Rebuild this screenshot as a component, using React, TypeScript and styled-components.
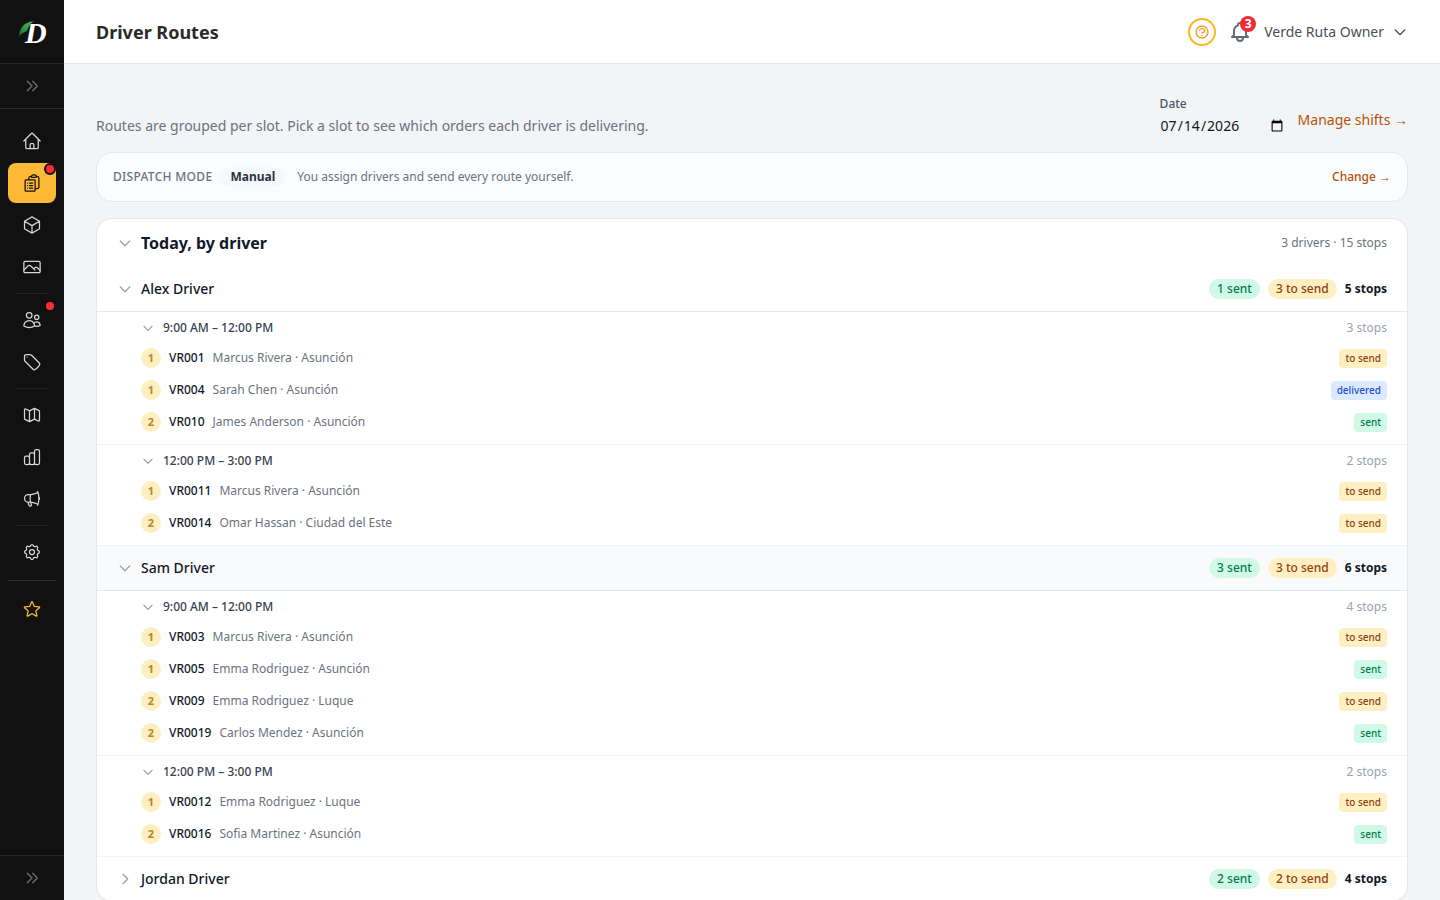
import React, { useState } from "react";
import styled, { createGlobalStyle, css } from "styled-components";
import {
  HiOutlineBell,
  HiOutlineChartBar,
  HiOutlineChevronDoubleRight,
  HiOutlineChevronDown,
  HiOutlineChevronRight,
  HiOutlineCog,
  HiOutlineMap,
  HiOutlineQuestionMarkCircle,
} from "react-icons/hi";
import {
  HiOutlineClipboardDocumentList,
  HiOutlineCube,
  HiOutlineHome,
  HiOutlineMegaphone,
  HiOutlineStar,
  HiOutlineTag,
  HiOutlineUsers,
} from "react-icons/hi2";

const GlobalStyle = createGlobalStyle`
  *, *::before, *::after { box-sizing: border-box; }
  body {
    margin: 0;
    background: #f3f4f6;
    color: #111827;
    font-family: "Noto Sans", sans-serif;
    font-size: 14px;
    line-height: 20px;
  }
  button, input { font: inherit; color: inherit; }
  button { border: 0; padding: 0; background: none; cursor: pointer; }
  a { text-decoration: none; }
  h1, h2, h3, p, ul, ol { margin: 0; padding: 0; }
  ul, ol { list-style: none; }
  svg { display: block; flex: none; }
`;

/* ---------- Shell ---------- */

const Shell = styled.div`
  display: flex;
  align-items: flex-start;
  min-height: 100vh;
`;

const Sidebar = styled.aside`
  position: sticky;
  top: 0;
  display: flex;
  flex-direction: column;
  flex: none;
  width: 64px;
  height: 100vh;
  background: #111111;
`;

const LogoLink = styled.a`
  display: flex;
  align-items: center;
  justify-content: center;
  height: 64px;
  border-bottom: 1px solid #24292d;
`;

const ExpandButton = styled.button<{ $edge: "top" | "bottom" }>`
  display: flex;
  align-items: center;
  justify-content: center;
  height: 45px;
  color: #6b7078;
  ${({ $edge }) =>
    $edge === "top"
      ? css`border-top: 1px solid #24292d;`
      : css`border-bottom: 1px solid #24292d;`}
`;

const Nav = styled.nav`
  display: flex;
  flex-direction: column;
  flex: 1;
  gap: 2px;
  padding: 12px 8px;
`;

const NavLink = styled.a<{ $active?: boolean; $accent?: boolean }>`
  position: relative;
  display: flex;
  align-items: center;
  justify-content: center;
  height: 40px;
  border-radius: 8px;
  color: ${({ $active, $accent }) => ($active ? "#111111" : $accent ? "#fbb91c" : "#d6d6d6")};
  background: ${({ $active }) => ($active ? "#feb937" : "transparent")};
`;

const NavDot = styled.span`
  position: absolute;
  top: 0;
  right: 0;
  width: 12px;
  height: 12px;
  border: 2px solid #111111;
  border-radius: 50%;
  background: #fb2c36;
`;

const NavDivider = styled.hr<{ $wide?: boolean }>`
  width: ${({ $wide }) => ($wide ? "100%" : "auto")};
  height: 1px;
  margin: ${({ $wide }) => ($wide ? "6px 0" : "4px 8px")};
  border: 0;
  background: ${({ $wide }) => ($wide ? "#2a2e32" : "#232323")};
`;

const Page = styled.div`
  flex: 1;
  min-width: 0;
`;

/* ---------- Top bar ---------- */

const TopBar = styled.header`
  display: flex;
  align-items: center;
  justify-content: space-between;
  height: 64px;
  padding: 0 32px;
  border-bottom: 1px solid #e5e7eb;
  background: #ffffff;
`;

const PageTitle = styled.h1`
  color: #2a2a2a;
  font-size: 18px;
  font-weight: 700;
  line-height: 28px;
`;

const TopActions = styled.div`
  display: flex;
  align-items: center;
  gap: 12px;
`;

const HelpButton = styled.button`
  display: flex;
  align-items: center;
  justify-content: center;
  width: 28px;
  height: 28px;
  border: 2px solid #fbb91c;
  border-radius: 50%;
  color: #f59e1b;
`;

const BellButton = styled.button`
  position: relative;
  color: #666a73;
`;

const BellCount = styled.span`
  position: absolute;
  top: -4px;
  right: -4px;
  width: 16px;
  height: 16px;
  border-radius: 50%;
  background: #f02b38;
  color: #ffffff;
  font-size: 12px;
  font-weight: 700;
  line-height: 16px;
  text-align: center;
`;

const UserButton = styled.button`
  display: flex;
  align-items: center;
  gap: 8px;
  color: #4b4f57;
`;

/* ---------- Content ---------- */

const Main = styled.main`
  padding: 32px;
  display: flex;
  flex-direction: column;
  gap: 16px;
`;

const Intro = styled.div`
  display: flex;
  align-items: flex-end;
  justify-content: space-between;
  gap: 16px;
`;

const IntroText = styled.p`
  color: #6b7280;
`;

const IntroTools = styled.div`
  display: flex;
  align-items: flex-end;
  gap: 12px;
`;

const DateField = styled.div`
  display: flex;
  flex-direction: column;
  gap: 4px;
`;

const DateLabel = styled.label`
  color: #4b5563;
  font-size: 12px;
  font-weight: 500;
  line-height: 16px;
`;

const DateInput = styled.input`
  width: 126px;
  height: 20px;
  padding: 0;
  border: 0;
  background: transparent;
  color: #111827;
`;

const ShiftsLink = styled.a`
  padding-bottom: 6px;
  color: #b45309;
`;

const DispatchCard = styled.section`
  display: flex;
  align-items: center;
  gap: 12px;
  padding: 14px 16px;
  border: 1px solid #e5e7eb;
  border-radius: 16px;
  background: #fbfcfd;
  color: #6b7280;
  font-size: 12px;
`;

const DispatchCurrent = styled.div`
  display: flex;
  align-items: center;
  gap: 8px;
`;

const DispatchLabel = styled.h2`
  font-size: 12px;
  font-weight: 500;
  letter-spacing: 0.025em;
  text-transform: uppercase;
`;

const DispatchMode = styled.strong`
  padding: 0 10px;
  border-radius: 10px;
  background: #f6f8fa;
  color: #2b3443;
  font-weight: 700;
`;

const ChangeLink = styled.a`
  margin-left: auto;
  color: #b45309;
  font-weight: 500;
`;

const RoutesCard = styled.section`
  overflow: hidden;
  border: 1px solid #e5e7eb;
  border-radius: 16px;
  background: #ffffff;
`;

const rowButton = css`
  display: flex;
  align-items: center;
  gap: 8px;
  width: 100%;
  text-align: left;
  > svg { color: #9ca3af; }
`;

const CardHeader = styled.button`
  ${rowButton}
  padding: 12px 20px;
`;

const CardTitle = styled.span`
  flex: 1;
  font-size: 16px;
  font-weight: 700;
  line-height: 24px;
`;

const CardSummary = styled.span`
  color: #6b7280;
  font-size: 12px;
`;

const DriverHeader = styled.button<{ $open: boolean; $tinted?: boolean }>`
  ${rowButton}
  padding: 12px 20px;
  border-bottom: ${({ $open }) => ($open ? "1px solid #e5e7eb" : "0")};
  background: ${({ $tinted }) => ($tinted ? "#f9fafb" : "transparent")};
`;

const DriverName = styled.span`
  flex: 1;
  font-weight: 500;
`;

type Tone = "green" | "amber" | "blue";

const tones: Record<Tone, { background: string; color: string }> = {
  green: { background: "#d0fae5", color: "#047857" },
  amber: { background: "#fef0c3", color: "#92400e" },
  blue: { background: "#dbeafe", color: "#1d4ed8" },
};

const CountPill = styled.span<{ $tone: Tone }>`
  padding: 2px 8px;
  border-radius: 10px;
  background: ${({ $tone }) => tones[$tone].background};
  color: ${({ $tone }) => tones[$tone].color};
  font-size: 12px;
  font-weight: 500;
  line-height: 16px;
`;

const StopTotal = styled.span`
  font-size: 12px;
  font-weight: 700;
`;

const Slot = styled.section`
  padding-bottom: 6px;
  border-bottom: 1px solid #f3f4f6;
`;

const SlotHeader = styled.button`
  ${rowButton}
  padding: 8px 20px 6px 44px;
  font-size: 12px;
  line-height: 16px;
`;

const SlotTime = styled.span`
  flex: 1;
  color: #374151;
  font-weight: 500;
`;

const SlotCount = styled.span`
  color: #9ca3af;
`;

const Stop = styled.li`
  display: flex;
  align-items: center;
  gap: 8px;
  height: 32px;
  padding: 0 20px 0 44px;
  font-size: 12px;
  line-height: 16px;
`;

const StopNumber = styled.span`
  flex: none;
  width: 20px;
  height: 20px;
  border-radius: 50%;
  background: #feefc3;
  color: #b7852b;
  font-size: 11px;
  font-weight: 700;
  line-height: 20px;
  text-align: center;
`;

const StopCode = styled.span`
  font-weight: 500;
`;

const StopPlace = styled.span`
  flex: 1;
  color: #6b7280;
`;

const StatusTag = styled.span<{ $tone: Tone }>`
  padding: 2px 6px;
  border-radius: 4px;
  background: ${({ $tone }) => tones[$tone].background};
  color: ${({ $tone }) => tones[$tone].color};
  font-size: 10px;
  font-weight: 500;
  line-height: 15px;
`;

/* ---------- Icons ---------- */

function Logo() {
  return (
    <svg width="44" height="44" viewBox="0 0 44 44" aria-hidden="true">
      <defs>
        <linearGradient id="leaf" x1="0" y1="1" x2="1" y2="0">
          <stop offset="0" stopColor="#14783a" />
          <stop offset="1" stopColor="#4fc05a" />
        </linearGradient>
      </defs>
      <text
        x="15"
        y="33"
        fill="#ffffff"
        fontFamily="Liberation Sans Narrow, Liberation Serif, serif"
        fontSize="30"
        fontStyle="italic"
        fontWeight="700"
      >
        D
      </text>
      <path
        d="M9 27C9 19 13 11 25 11C20 13 19 17 17 21C15 23 12 22 9 27Z"
        fill="url(#leaf)"
        stroke="#111111"
        strokeWidth="0.5"
      />
    </svg>
  );
}

interface IconProps {
  size?: number;
  strokeWidth?: number;
}

function PictureIcon({ size = 20, strokeWidth = 1.5 }: IconProps) {
  return (
    <svg
      width={size}
      height={size}
      viewBox="0 0 24 24"
      fill="none"
      stroke="currentColor"
      strokeWidth={strokeWidth}
      strokeLinecap="round"
      strokeLinejoin="round"
      aria-hidden="true"
    >
      <rect x="2.25" y="5.25" width="19.5" height="13.5" rx="1.5" />
      <path d="M2.25 15.75l5.2-5.2a2 2 0 012.9 0l5.2 5.2m-1.5-1.5l1.4-1.4a2 2 0 012.9 0l3.4 3.4" />
    </svg>
  );
}

/* ---------- Data ---------- */

interface NavEntry {
  label: string;
  icon: React.ComponentType<IconProps>;
  active?: boolean;
  dot?: boolean;
}

const navGroups: NavEntry[][] = [
  [
    { label: "Home", icon: HiOutlineHome },
    { label: "Orders", icon: HiOutlineClipboardDocumentList, active: true, dot: true },
    { label: "Products", icon: HiOutlineCube },
    { label: "Media", icon: PictureIcon },
  ],
  [
    { label: "Customers", icon: HiOutlineUsers, dot: true },
    { label: "Discounts", icon: HiOutlineTag },
  ],
  [
    { label: "Map", icon: HiOutlineMap },
    { label: "Reports", icon: HiOutlineChartBar },
    { label: "Marketing", icon: HiOutlineMegaphone },
  ],
  [{ label: "Settings", icon: HiOutlineCog }],
];

type Status = "to send" | "delivered" | "sent";

const statusTone: Record<Status, Tone> = {
  "to send": "amber",
  delivered: "blue",
  sent: "green",
};

interface StopData {
  order: number;
  code: string;
  place: string;
  status: Status;
}

interface SlotData {
  time: string;
  stops: StopData[];
}

interface DriverData {
  name: string;
  sent: number;
  toSend: number;
  total: number;
  open: boolean;
  tinted?: boolean;
  slots: SlotData[];
}

const stop = (order: number, code: string, place: string, status: Status): StopData => ({
  order,
  code,
  place,
  status,
});

const drivers: DriverData[] = [
  {
    name: "Alex Driver",
    sent: 1,
    toSend: 3,
    total: 5,
    open: true,
    slots: [
      {
        time: "9:00 AM – 12:00 PM",
        stops: [
          stop(1, "VR001", "Marcus Rivera · Asunción", "to send"),
          stop(1, "VR004", "Sarah Chen · Asunción", "delivered"),
          stop(2, "VR010", "James Anderson · Asunción", "sent"),
        ],
      },
      {
        time: "12:00 PM – 3:00 PM",
        stops: [
          stop(1, "VR0011", "Marcus Rivera · Asunción", "to send"),
          stop(2, "VR0014", "Omar Hassan · Ciudad del Este", "to send"),
        ],
      },
    ],
  },
  {
    name: "Sam Driver",
    sent: 3,
    toSend: 3,
    total: 6,
    open: true,
    tinted: true,
    slots: [
      {
        time: "9:00 AM – 12:00 PM",
        stops: [
          stop(1, "VR003", "Marcus Rivera · Asunción", "to send"),
          stop(1, "VR005", "Emma Rodriguez · Asunción", "sent"),
          stop(2, "VR009", "Emma Rodriguez · Luque", "to send"),
          stop(2, "VR0019", "Carlos Mendez · Asunción", "sent"),
        ],
      },
      {
        time: "12:00 PM – 3:00 PM",
        stops: [
          stop(1, "VR0012", "Emma Rodriguez · Luque", "to send"),
          stop(2, "VR0016", "Sofia Martinez · Asunción", "sent"),
        ],
      },
    ],
  },
  { name: "Jordan Driver", sent: 2, toSend: 2, total: 4, open: false, slots: [] },
];

/* ---------- Components ---------- */

function Chevron({ open, size }: { open: boolean; size: number }) {
  return open ? <HiOutlineChevronDown size={size} /> : <HiOutlineChevronRight size={size} />;
}

function SlotSection({ slot }: { slot: SlotData }) {
  const [open, setOpen] = useState(true);
  return (
    <Slot>
      <SlotHeader type="button" aria-expanded={open} onClick={() => setOpen(!open)}>
        <Chevron open={open} size={14} />
        <SlotTime>{slot.time}</SlotTime>
        <SlotCount>{slot.stops.length} stops</SlotCount>
      </SlotHeader>
      {open && (
        <ol>
          {slot.stops.map((s) => (
            <Stop key={s.code}>
              <StopNumber>{s.order}</StopNumber>
              <StopCode>{s.code}</StopCode>
              <StopPlace>{s.place}</StopPlace>
              <StatusTag $tone={statusTone[s.status]}>{s.status}</StatusTag>
            </Stop>
          ))}
        </ol>
      )}
    </Slot>
  );
}

function DriverSection({ driver }: { driver: DriverData }) {
  const [open, setOpen] = useState(driver.open);
  return (
    <section>
      <DriverHeader
        type="button"
        $open={open}
        $tinted={driver.tinted}
        aria-expanded={open}
        onClick={() => setOpen(!open)}
      >
        <Chevron open={open} size={16} />
        <DriverName>{driver.name}</DriverName>
        <CountPill $tone="green">{driver.sent} sent</CountPill>
        <CountPill $tone="amber">{driver.toSend} to send</CountPill>
        <StopTotal>{driver.total} stops</StopTotal>
      </DriverHeader>
      {open && driver.slots.map((slot) => <SlotSection key={slot.time} slot={slot} />)}
    </section>
  );
}

export default function App() {
  const [date, setDate] = useState("2026-07-14");
  const [open, setOpen] = useState(true);

  return (
    <>
      <GlobalStyle />
      <Shell>
        <Sidebar>
          <LogoLink href="#" aria-label="Dashboard">
            <Logo />
          </LogoLink>
          <ExpandButton type="button" $edge="bottom" aria-label="Expand menu">
            <HiOutlineChevronDoubleRight size={16} />
          </ExpandButton>
          <Nav aria-label="Main">
            {navGroups.map((group, i) => (
              <React.Fragment key={group[0].label}>
                {i > 0 && <NavDivider />}
                {group.map(({ label, icon: Icon, active, dot }) => (
                  <NavLink
                    key={label}
                    href="#"
                    aria-label={label}
                    aria-current={active ? "page" : undefined}
                    $active={active}
                  >
                    <Icon size={20} strokeWidth={1.5} />
                    {dot && <NavDot />}
                  </NavLink>
                ))}
              </React.Fragment>
            ))}
            <NavDivider $wide />
            <NavLink href="#" aria-label="Upgrade" $accent>
              <HiOutlineStar size={20} />
            </NavLink>
          </Nav>
          <ExpandButton type="button" $edge="top" aria-label="Expand sidebar">
            <HiOutlineChevronDoubleRight size={16} />
          </ExpandButton>
        </Sidebar>

        <Page>
          <TopBar>
            <PageTitle>Driver Routes</PageTitle>
            <TopActions>
              <HelpButton type="button" aria-label="Help">
                <HiOutlineQuestionMarkCircle size={16} />
              </HelpButton>
              <BellButton type="button" aria-label="Notifications">
                <HiOutlineBell size={24} />
                <BellCount>3</BellCount>
              </BellButton>
              <UserButton type="button">
                Verde Ruta Owner
                <HiOutlineChevronDown size={16} />
              </UserButton>
            </TopActions>
          </TopBar>

          <Main>
            <Intro>
              <IntroText>
                Routes are grouped per slot. Pick a slot to see which orders each driver is delivering.
              </IntroText>
              <IntroTools>
                <DateField>
                  <DateLabel htmlFor="route-date">Date</DateLabel>
                  <DateInput
                    id="route-date"
                    type="date"
                    value={date}
                    onChange={(e) => setDate(e.target.value)}
                  />
                </DateField>
                <ShiftsLink href="#">Manage shifts →</ShiftsLink>
              </IntroTools>
            </Intro>

            <DispatchCard>
              <DispatchCurrent>
                <DispatchLabel>Dispatch mode</DispatchLabel>
                <DispatchMode>Manual</DispatchMode>
              </DispatchCurrent>
              <p>You assign drivers and send every route yourself.</p>
              <ChangeLink href="#">Change →</ChangeLink>
            </DispatchCard>

            <RoutesCard>
              <CardHeader type="button" aria-expanded={open} onClick={() => setOpen(!open)}>
                <Chevron open={open} size={16} />
                <CardTitle>Today, by driver</CardTitle>
                <CardSummary>3 drivers · 15 stops</CardSummary>
              </CardHeader>
              {open && drivers.map((driver) => <DriverSection key={driver.name} driver={driver} />)}
            </RoutesCard>
          </Main>
        </Page>
      </Shell>
    </>
  );
}
